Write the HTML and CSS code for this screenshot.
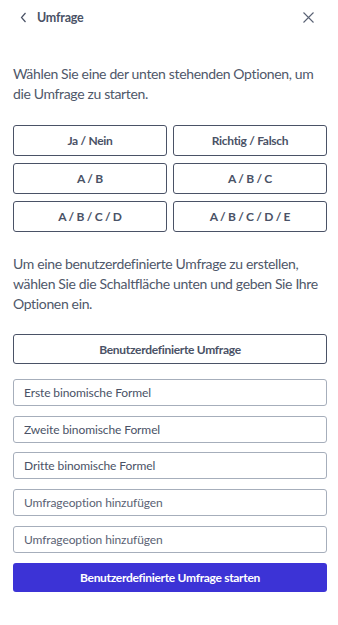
FILE: index.html
```html
<!DOCTYPE html>
<html lang="de">
<head>
<meta charset="utf-8">
<title>Umfrage</title>
<link rel="stylesheet" href="styles.css">
</head>
<body>
<div class="panel">
  <header class="header">
    <button class="back" aria-label="Zurück">
      <svg width="7" height="11" viewBox="0 0 7 11"><path d="M5.5 1 L1.5 5.5 L5.5 10" fill="none" stroke="#4a5266" stroke-width="1.2"/></svg>
      <span class="title">Umfrage</span>
    </button>
    <button class="close" aria-label="Schließen">
      <svg width="11" height="11" viewBox="0 0 11 11"><path d="M0.5 0.5 L10.5 10.5 M10.5 0.5 L0.5 10.5" fill="none" stroke="#5a6274" stroke-width="1.1"/></svg>
    </button>
  </header>

  <p class="text first">Wählen Sie eine der unten stehenden Optionen, um die Umfrage zu starten.</p>

  <div class="grid">
    <button class="opt">Ja / Nein</button>
    <button class="opt">Richtig / Falsch</button>
    <button class="opt">A / B</button>
    <button class="opt">A / B / C</button>
    <button class="opt">A / B / C / D</button>
    <button class="opt">A / B / C / D / E</button>
  </div>

  <p class="text second">Um eine benutzerdefinierte Umfrage zu erstellen, wählen Sie die Schaltfläche unten und geben Sie Ihre Optionen ein.</p>

  <button class="opt wide">Benutzerdefinierte Umfrage</button>

  <div class="inputs">
    <input class="field" type="text" value="Erste binomische Formel">
    <input class="field" type="text" value="Zweite binomische Formel">
    <input class="field" type="text" value="Dritte binomische Formel">
    <input class="field" type="text" placeholder="Umfrageoption hinzufügen">
    <input class="field" type="text" placeholder="Umfrageoption hinzufügen">
  </div>

  <button class="start">Benutzerdefinierte Umfrage starten</button>
</div>
</body>
</html>
```

FILE: styles.css
```css
* { box-sizing: border-box; }
html, body { margin: 0; padding: 0; background: #fff; }
body {
  font-family: "Lato", "Liberation Sans", sans-serif;
  color: #4a5266;
}
.panel { padding: 0 11px 0 13px; display: flex; flex-direction: column; }
.header {
  height: 34px;
  display: flex;
  align-items: center;
  justify-content: space-between;
  padding: 0 13px 0 7px;
}
.back, .close {
  background: none; border: 0; padding: 0; margin: 0;
  display: flex; align-items: center; cursor: pointer;
  font-family: inherit; color: inherit;
}
.back svg { margin-right: 10px; }
.title { font-size: 12.5px; font-weight: 700; color: #4a5266; letter-spacing: -0.2px; }
.text {
  margin: 0;
  font-size: 14px;
  line-height: 20px;
  letter-spacing: -0.35px;
  color: #4f586a;
}
.first { margin-top: 30px; }
.grid {
  margin-top: 21px;
  display: grid;
  grid-template-columns: 1fr 1fr;
  column-gap: 6px;
  row-gap: 7px;
}
.opt {
  height: 31px;
  border: 1px solid #4a5266;
  border-radius: 3px;
  background: #fff;
  font-family: inherit;
  font-size: 12px;
  font-weight: 700;
  letter-spacing: -0.3px;
  color: #4a5266;
  padding: 0;
}
.second { margin-top: 22px; }
.wide { margin-top: 20px; height: 30px; width: 100%; }
.inputs {
  margin-top: 15px;
  display: flex; flex-direction: column;
  gap: 9.7px;
}
.field {
  height: 27px;
  width: 100%;
  border: 1px solid #a6aebb;
  border-radius: 3px;
  padding: 0 10px;
  font-family: inherit;
  font-size: 12px;
  letter-spacing: -0.1px;
  color: #4a5266;
  background: #fff;
  outline: none;
}
.field::placeholder { color: #5a6274; opacity: 1; }
.start {
  margin-top: 10px;
  height: 29px;
  width: 100%;
  border: 0;
  border-radius: 3px;
  background: #3c33d6;
  color: #fff;
  font-family: inherit;
  font-size: 12px;
  font-weight: 700;
  letter-spacing: -0.3px;
}
```
